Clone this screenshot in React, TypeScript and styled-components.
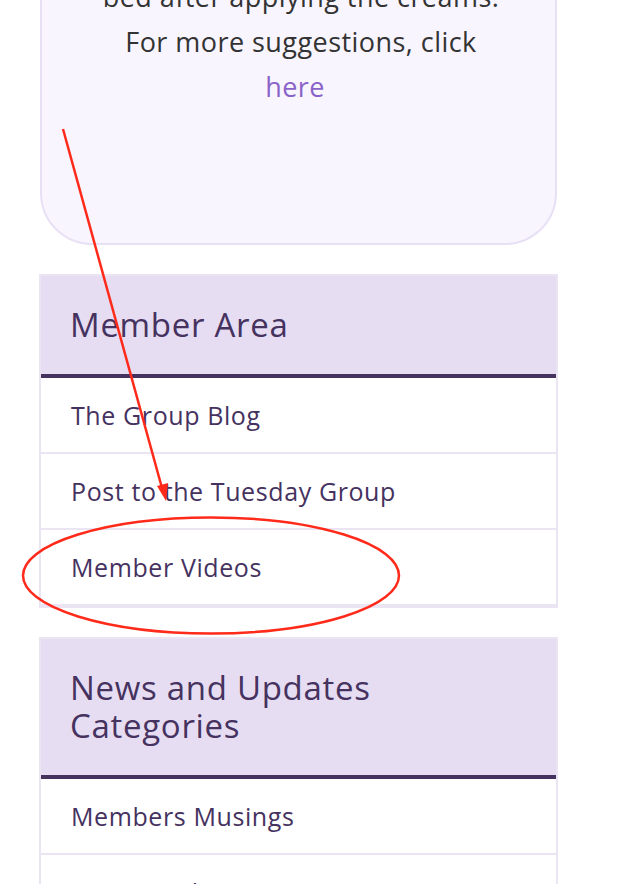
import React from 'react'
import styled, { createGlobalStyle } from 'styled-components'

const GlobalStyle = createGlobalStyle`
  html, body {
    margin: 0;
    padding: 0;
    background: #ffffff;
    overflow: hidden;
  }
  body {
    font-family: "Open Sans", "Noto Sans", Arial, sans-serif;
  }
`

const memberLinks = ['The Group Blog', 'Post to the Tuesday Group', 'Member Videos']
const newsLinks = ['Members Musings', "Past Members' Musings", 'Events']

const App = () => {
  return (
    <Page>
      <GlobalStyle />
      <Sidebar>
        <TipCard>
          <TipText>
            bed after applying the creams.
            <br />
            For more suggestions, click
            <br />
            <TipLink href="#">here</TipLink>
          </TipText>
        </TipCard>

        <Widget>
          <WidgetTitle>Member Area</WidgetTitle>
          <LinkList>
            {memberLinks.map((l) => (
              <LinkItem key={l}>
                <ItemLink href="#">{l}</ItemLink>
              </LinkItem>
            ))}
          </LinkList>
        </Widget>

        <Widget>
          <WidgetTitle>
            News and Updates
            <br />
            Categories
          </WidgetTitle>
          <LinkList>
            {newsLinks.map((l) => (
              <LinkItem key={l}>
                <ItemLink href="#">{l}</ItemLink>
              </LinkItem>
            ))}
          </LinkList>
        </Widget>
      </Sidebar>

      {/* red markup drawn over the screenshot */}
      <Markup width="622" height="884" viewBox="0 0 622 884">
        <line x1="63" y1="129" x2="162" y2="488" stroke="#ff2a1a" strokeWidth="2.5" />
        <polygon points="166,501 157,486 168,483" fill="#ff2a1a" />
        <ellipse cx="211" cy="575.5" rx="188" ry="58" fill="none" stroke="#ff2a1a" strokeWidth="2.5" />
      </Markup>
    </Page>
  )
}

export default App

const Markup = styled.svg`
position: absolute;
top: 0;
left: 0;
pointer-events: none;
`

const ItemLink = styled.a`
color: #45325f;
text-decoration: none;
`

const LinkItem = styled.li`
padding: 20px 30px;
font-size: 25px;
line-height: 34px;
letter-spacing: 0.6px;
border-bottom: 2px solid #ebe5f3;
`

const LinkList = styled.ul`
list-style: none;
margin: 0;
padding: 0;
background: #ffffff;
`

const WidgetTitle = styled.h2`
margin: 0;
padding: 30px 29px;
font-size: 33px;
line-height: 38px;
letter-spacing: 0.7px;
font-weight: 400;
color: #45325f;
background: #e6ddf2;
border-bottom: 4px solid #45325f;
`

const Widget = styled.section`
border: 2px solid #ebe5f3;
margin-top: 29px;
`

const TipLink = styled.a`
color: #8a63c8;
text-decoration: none;
margin-right: 12px;
`

const TipText = styled.p`
margin: 0;
text-align: center;
font-size: 27px;
line-height: 45px;
letter-spacing: 0.45px;
color: #333333;
`

const TipCard = styled.div`
margin: -68px 1px 0;
padding: 40px 20px 134px 25px;
background: #f8f5fe;
border: 2px solid #e8e0f5;
border-radius: 0 0 52px 52px;
`

const Sidebar = styled.div`
width: 519px;
margin-left: 39px;
`

const Page = styled.div`
position: relative;
width: 622px;
height: 884px;
overflow: hidden;
`
